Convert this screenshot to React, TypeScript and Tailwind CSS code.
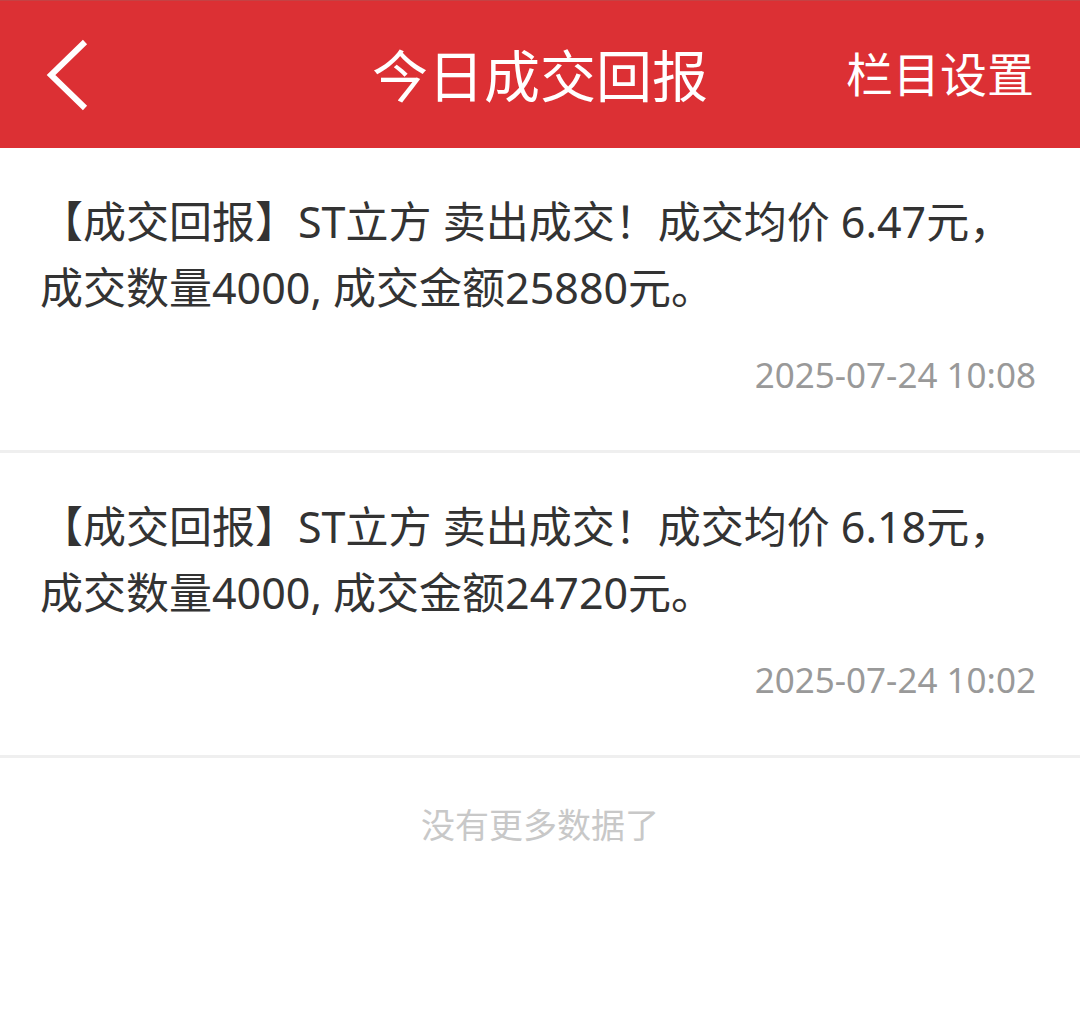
import React from "react";

const font = "font-['Noto_Sans','Noto_Sans_CJK_SC',sans-serif]";

const reports = [
  {
    line1: "【成交回报】ST立方 卖出成交！成交均价 6.47元，",
    line2: "成交数量4000, 成交金额25880元。",
    time: "2025-07-24 10:08",
  },
  {
    line1: "【成交回报】ST立方 卖出成交！成交均价 6.18元，",
    line2: "成交数量4000, 成交金额24720元。",
    time: "2025-07-24 10:02",
  },
];

const BackIcon = () => (
  <svg width="48" height="72" viewBox="0 0 48 72" fill="none">
    <polyline
      points="39,6 5,39 39,72"
      stroke="white"
      strokeWidth="6"
      strokeLinecap="butt"
      strokeLinejoin="miter"
      transform="translate(0,-3)"
    />
  </svg>
);

export default function App() {
  return (
    <div className={`min-h-[1011px] w-full bg-white ${font}`}>
      <header className="grid h-[148px] grid-cols-[1fr_auto_1fr] items-center border-t border-[#c54244] bg-[#dc3034] text-white">
        <div className="flex items-center pl-[46px]">
          <BackIcon />
        </div>
        <h1 className="text-[56px] leading-none">今日成交回报</h1>
        <div className="flex justify-end pr-[46px] text-[47px] leading-none">栏目设置</div>
      </header>

      <main>
        {reports.map((r, i) => (
          <div key={i} className="border-b-[3px] border-[#efefef] pt-[41px] pb-[53px]">
            <p className="px-[40px] text-[43px] leading-[66px] text-[#333333]">
              <span className="block whitespace-nowrap">{r.line1}</span>
              <span className="block whitespace-nowrap">{r.line2}</span>
            </p>
            <div className="mt-[32px] pr-[44px] text-right text-[35px] leading-[44px] text-[#999999]">{r.time}</div>
          </div>
        ))}
        <div className="pt-[45px] text-center text-[34px] leading-[44px] text-[#c8c8c8]">没有更多数据了</div>
      </main>
    </div>
  );
}
